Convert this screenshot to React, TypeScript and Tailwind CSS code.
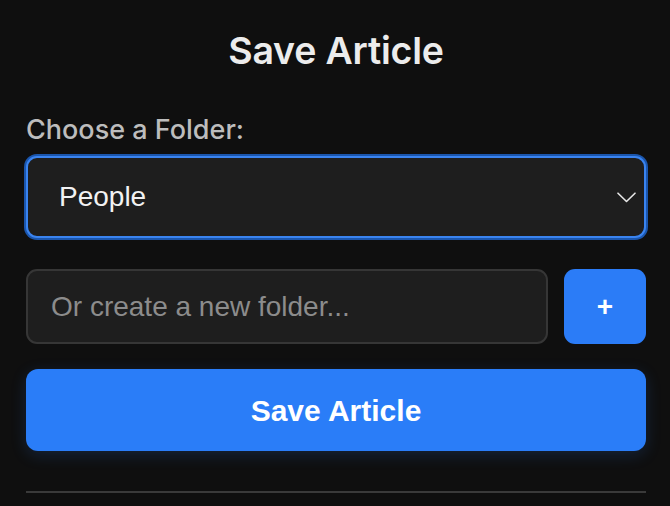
import React from "react";

export default function App() {
  return (
    <div className="min-h-[506px] w-full bg-[#0f0f0f] pl-[26px] pr-[24px] pt-[29px] flex flex-col" style={{ fontFamily: "Inter, 'Liberation Sans', sans-serif" }}>
      <h1 className="text-center text-[37.5px] leading-[44px] font-semibold text-[#ececec] tracking-[-0.2px]">Save Article</h1>
      <label className="mt-[41px] text-[27px] leading-[32px] font-medium text-[#bdbdbd]">Choose a Folder:</label>
      <div
        className="mt-[10px] h-[82px] w-full rounded-[11px] border-2 border-[#3a84f0] bg-[#1e1e1e] shadow-[0_0_0_2px_#1b56ad] flex items-center justify-between pl-[31px] pr-[8px]"
        style={{ fontFamily: "'Liberation Sans', Arial, sans-serif" }}
      >
        <span className="text-[28px] text-[#f2f2f2]">People</span>
        <svg width="19" height="11" viewBox="0 0 19 11" fill="none">
          <path d="M1 1.2 L9.5 9.5 L18 1.2" stroke="#e8e8e8" strokeWidth="1.6" strokeLinecap="round" strokeLinejoin="round" />
        </svg>
      </div>
      <div className="mt-[31px] flex gap-[16px]" style={{ fontFamily: "'Liberation Sans', Arial, sans-serif" }}>
        <input
          className="h-[75px] flex-1 min-w-0 rounded-[11px] border-2 border-[#363636] bg-[#1e1e1e] pl-[23px] text-[28px] text-[#f2f2f2] placeholder:text-[#8c8c8c] outline-none"
          placeholder="Or create a new folder..."
        />
        <button className="h-[75px] w-[82px] rounded-[11px] bg-[#2b7cf7] text-white text-[28px] font-bold flex items-center justify-center">+</button>
      </div>
      <button
        className="mt-[25px] h-[82px] w-full rounded-[12px] bg-[#2a7df8] text-white text-[30px] font-bold shadow-[0_4px_16px_rgba(42,125,248,0.18)]"
        style={{ fontFamily: "'Liberation Sans', Arial, sans-serif" }}
      >
        Save Article
      </button>
      <div className="mt-[40px] h-[2px] w-full bg-[#3a3a3a]" />
    </div>
  );
}
